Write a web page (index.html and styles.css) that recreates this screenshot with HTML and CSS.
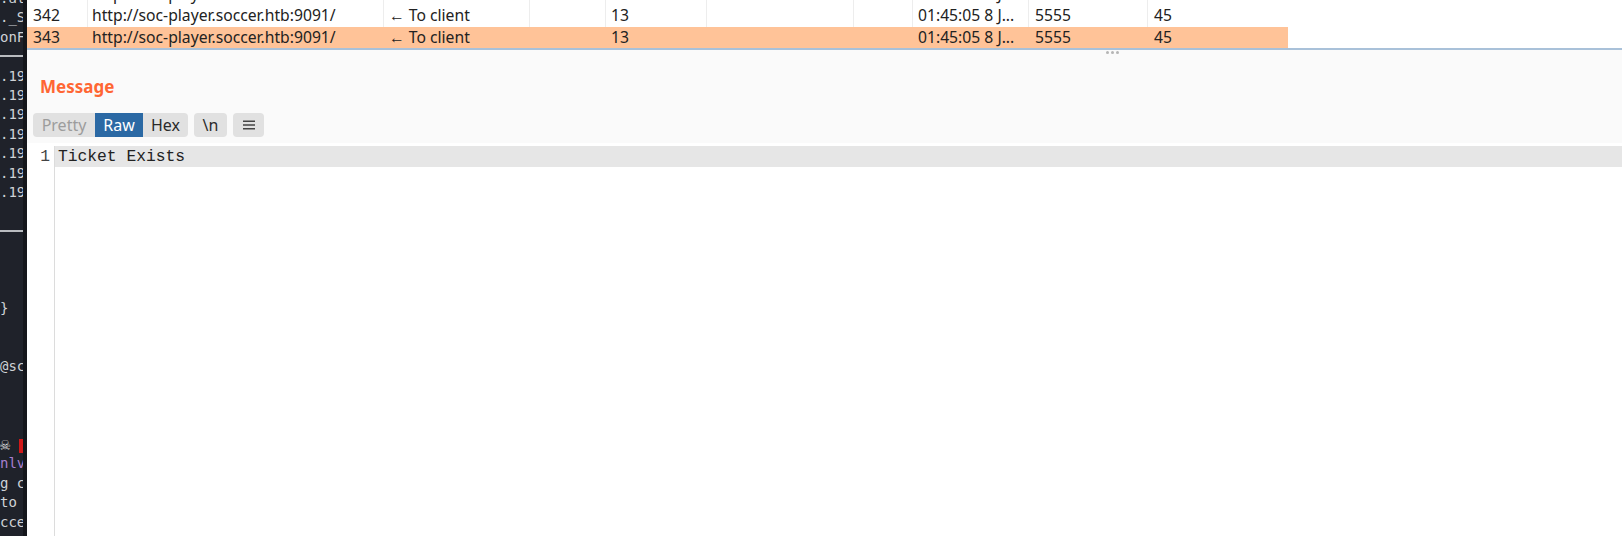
FILE: index.html
```html
<!DOCTYPE html>
<html>
<head>
<meta charset="utf-8">
<link rel="stylesheet" href="styles.css">
</head>
<body>
<div class="term">
  <div class="term-lines">
    <div class="tl">.at</div>
    <div class="tl">._S</div>
    <div class="tl">onF</div>
    <div class="tl rule"></div>
    <div class="tl">.19</div>
    <div class="tl">.19</div>
    <div class="tl">.19</div>
    <div class="tl">.19</div>
    <div class="tl">.19</div>
    <div class="tl">.19</div>
    <div class="tl">.19</div>
    <div class="tl"></div>
    <div class="tl rule"></div>
    <div class="tl"></div>
    <div class="tl"></div>
    <div class="tl"></div>
    <div class="tl">}</div>
    <div class="tl"></div>
    <div class="tl"></div>
    <div class="tl">@sc</div>
    <div class="tl"></div>
    <div class="tl"></div>
    <div class="tl"></div>
    <div class="tl"><span class="skull">&#9760;</span> <span class="red"></span></div>
    <div class="tl purple">nlv</div>
    <div class="tl">g c</div>
    <div class="tl">to</div>
    <div class="tl">cce</div>
  </div>
</div>
<div class="term-edge"></div>
<div class="app">
  <div class="table-area">
    <div class="table">
      <div class="row">
        <div class="c c1">341</div>
        <div class="c c2">http://soc-player.soccer.htb:9091/</div>
        <div class="c c3">&rarr; To server</div>
        <div class="c c4"></div>
        <div class="c c5">61</div>
        <div class="c c6"></div>
        <div class="c c7"></div>
        <div class="c c8">01:45:05 8 J...</div>
        <div class="c c9">5555</div>
        <div class="c c10">44</div>
      </div>
      <div class="row">
        <div class="c c1">342</div>
        <div class="c c2">http://soc-player.soccer.htb:9091/</div>
        <div class="c c3">&larr; To client</div>
        <div class="c c4"></div>
        <div class="c c5">13</div>
        <div class="c c6"></div>
        <div class="c c7"></div>
        <div class="c c8">01:45:05 8 J...</div>
        <div class="c c9">5555</div>
        <div class="c c10">45</div>
      </div>
      <div class="row sel">
        <div class="c c1">343</div>
        <div class="c c2">http://soc-player.soccer.htb:9091/</div>
        <div class="c c3">&larr; To client</div>
        <div class="c c4"></div>
        <div class="c c5">13</div>
        <div class="c c6"></div>
        <div class="c c7"></div>
        <div class="c c8">01:45:05 8 J...</div>
        <div class="c c9">5555</div>
        <div class="c c10">45</div>
      </div>
    </div>
  </div>
  <div class="splitter"></div>
  <div class="handle"><span class="dots"><i></i><i></i><i></i></span></div>
  <div class="message">
    <div class="title">Message</div>
    <div class="toolbar">
      <div class="group">
        <span class="btn dim">Pretty</span>
        <span class="btn on">Raw</span>
        <span class="btn">Hex</span>
      </div>
      <span class="btn single">\n</span>
      <span class="btn single menu">
        <svg width="12" height="10" viewBox="0 0 12 10"><rect x="0" y="0.5" width="12" height="1.5" fill="#444"/><rect x="0" y="4.25" width="12" height="1.5" fill="#444"/><rect x="0" y="8" width="12" height="1.5" fill="#444"/></svg>
      </span>
    </div>
  </div>
  <div class="editor">
    <div class="gutter"><div class="ln">1</div></div>
    <div class="code"><div class="line cur">Ticket Exists</div></div>
  </div>
</div>
</body>
</html>
```
FILE: styles.css
```css
html, body {
  margin: 0;
  padding: 0;
}
body {
  width: 1622px;
  height: 536px;
  overflow: hidden;
  display: flex;
  background: #fafafa;
  font-family: "Noto Sans", "Open Sans", sans-serif;
}
.term {
  width: 23px;
  background: #1f222a;
  overflow: hidden;
  flex: none;
}
.term-lines {
  margin-top: -11px;
  display: flex;
  flex-direction: column;
}
.tl {
  height: 19.4px;
  line-height: 19.4px;
  font-family: "DejaVu Sans Mono", monospace;
  font-size: 14px;
  color: #cfd2d6;
  white-space: pre;
  overflow: hidden;
  flex: none;
}
.tl.rule {
  background: linear-gradient(#1f222a 0, #1f222a 8px, #b9bcc0 8px, #b9bcc0 10px, #1f222a 10px);
}
.tl.purple { color: #a77fcf; }
.skull { color: #e6e6e6; font-size: 17px; }
.red {
  display: inline-block;
  width: 4px;
  height: 14px;
  background: #d01818;
  vertical-align: middle;
}
.term-edge {
  width: 4px;
  background: #14161b;
  flex: none;
}
.app {
  flex: 1;
  display: flex;
  flex-direction: column;
  min-width: 0;
  background: #fafafa;
}
.table-area {
  height: 48px;
  overflow: hidden;
  background: #fff;
  flex: none;
}
.table {
  width: 1261px;
  margin-top: -16.5px;
  display: flex;
  flex-direction: column;
}
.row {
  display: flex;
  height: 21.5px;
  line-height: 21.5px;
  font-size: 15.7px;
  color: #222;
  background: #fff;
}
.row.sel { background: #ffc398; }
.c {
  box-sizing: border-box;
  padding-left: 5px;
  border-right: 1px solid #ededed;
  white-space: nowrap;
  overflow: hidden;
  flex: none;
}
.row.sel .c { border-right-color: transparent; }
.c1 { width: 61px; padding-left: 6px; }
.c2 { width: 296px; padding-left: 4px; }
.c3 { width: 146px; }
.c4 { width: 76px; }
.c5 { width: 101px; }
.c6 { width: 147px; }
.c7 { width: 59px; }
.c8 { width: 116px; }
.c9 { width: 119px; padding-left: 6px; }
.c10 { width: 140px; padding-left: 6px; border-right: none; }
.splitter {
  height: 2px;
  background: #a9c1d9;
  flex: none;
}
.handle {
  height: 6px;
  display: flex;
  padding-left: 1079px;
  flex: none;
}
.dots { display: flex; gap: 2px; padding-top: 1px; }
.dots i {
  display: block;
  width: 3px;
  height: 3px;
  border-radius: 50%;
  background: #b5b5b5;
}
.message {
  padding-left: 13px;
  padding-top: 21px;
  flex: none;
}
.title {
  color: #ff6633;
  font-weight: bold;
  font-size: 17px;
  line-height: 20px;
  height: 20px;
}
.toolbar {
  margin-top: 16px;
  margin-left: -7px;
  display: flex;
  gap: 6px;
  height: 24px;
}
.group {
  display: flex;
  background: #e1e1e1;
  border-radius: 4px;
  overflow: hidden;
}
.btn {
  display: flex;
  align-items: center;
  justify-content: center;
  height: 24px;
  font-size: 16px;
  color: #2a2a2a;
  padding: 0 8px;
}
.group .btn:nth-child(1) { width: 62px; padding: 0; }
.group .btn:nth-child(2) { width: 48px; padding: 0; }
.group .btn:nth-child(3) { width: 45px; padding: 0; }
.btn.dim { color: #9c9c9c; }
.btn.on { background: #2b69a4; color: #fff; }
.btn.single {
  background: #e1e1e1;
  border-radius: 4px;
  width: 33px;
  padding: 0;
}
.btn.menu { width: 31px; }
.editor {
  flex: 1;
  margin-top: 6px;
  background: #fff;
  display: flex;
  padding-top: 3px;
}
.gutter {
  width: 28px;
  box-sizing: border-box;
  border-right: 1px solid #dcdcdc;
  flex: none;
}
.ln {
  font-family: "Liberation Mono", monospace;
  font-size: 16.3px;
  line-height: 21px;
  color: #444;
  text-align: right;
  padding-right: 4px;
}
.code { flex: 1; }
.line {
  font-family: "Liberation Mono", monospace;
  font-size: 16.3px;
  line-height: 21px;
  height: 21px;
  color: #222;
  padding-left: 3px;
  white-space: pre;
}
.line.cur { background: #e6e6e6; }
```
